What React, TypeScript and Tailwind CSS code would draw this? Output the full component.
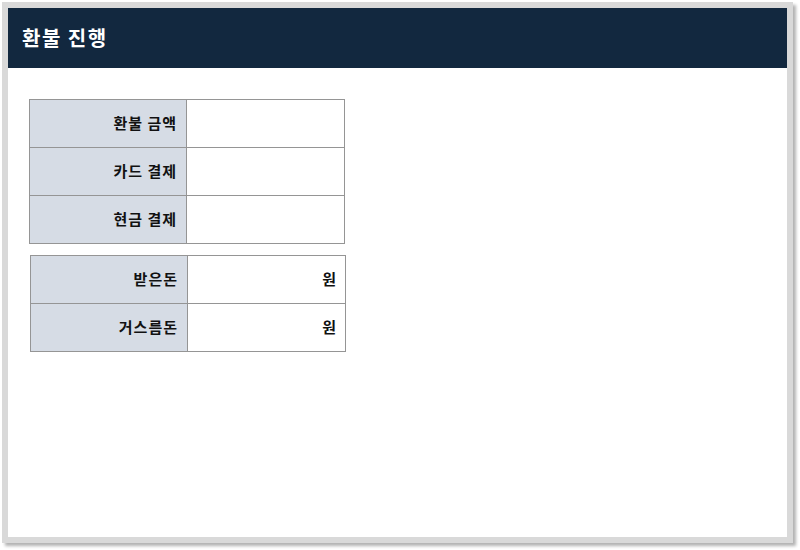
const font = { fontFamily: '"Noto Sans CJK KR", "Noto Sans", sans-serif' };

function Row({ label, value, last }: { label: string; value?: string; last?: boolean }) {
  return (
    <div className={`flex ${last ? "h-[47px]" : "h-[48px] border-b border-[#959595]"}`}>
      <div className="w-[157px] bg-[#d6dce5] border-r border-[#959595] flex items-center justify-end pr-[9px] text-[15px] font-bold tracking-[1px] text-[#111]">
        {label}
      </div>
      <div className="flex-1 bg-white flex items-center justify-end pr-[9px] text-[15px] font-bold text-[#111]">
        {value}
      </div>
    </div>
  );
}

export default function App() {
  return (
    <div className="w-[800px] h-[550px] bg-white" style={font}>
      <div className="ml-[2px] mt-[2px] w-[791px] h-[541px] border-[6px] border-[#d9d9d9] bg-white shadow-[3px_3px_3px_rgba(0,0,0,0.3)] flex flex-col">
        <div className="h-[60px] bg-[#12283f] flex items-center pl-[14px]">
          <h1 className="text-white text-[20px] font-bold tracking-[1.5px]">환불 진행</h1>
        </div>

        <div className="pt-[31px] pl-[21px]">
          {/* 금액 */}
          <div className="w-[316px] border border-[#959595]">
            <Row label="환불 금액" />
            <Row label="카드 결제" />
            <Row label="현금 결제" last />
          </div>

          {/* 거스름돈 */}
          <div className="mt-[11px] ml-[1px] w-[316px] border border-[#959595]">
            <Row label="받은돈" value="원" />
            <Row label="거스름돈" value="원" last />
          </div>
        </div>
      </div>
    </div>
  );
}
